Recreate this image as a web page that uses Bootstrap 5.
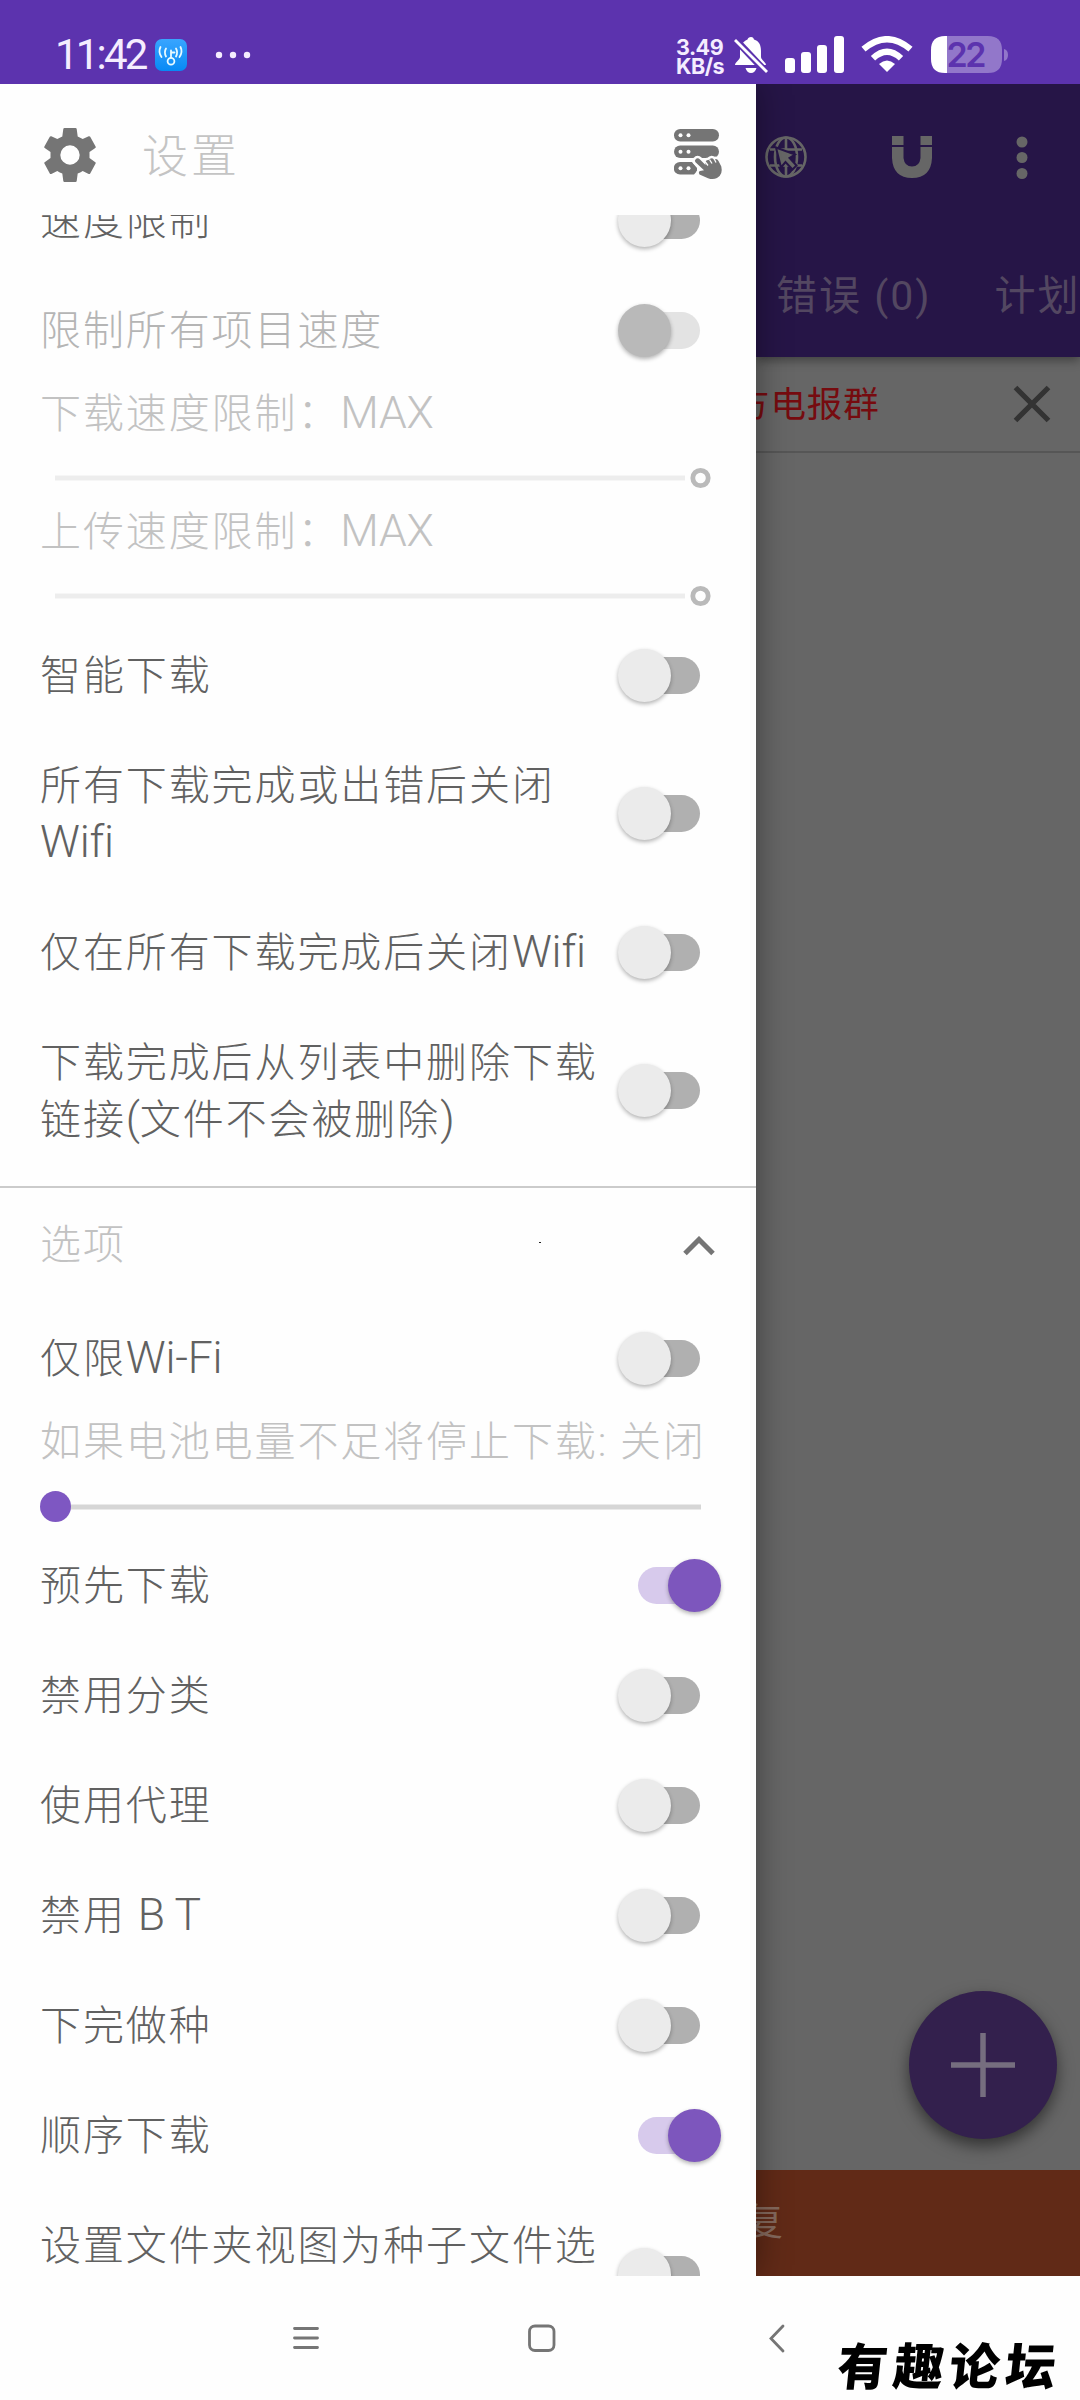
<!DOCTYPE html>
<html lang="zh-CN">
<head>
<meta charset="utf-8">
<title>设置</title>
<meta name="viewport" content="width=device-width, initial-scale=1">
<link href="https://cdn.jsdelivr.net/npm/bootstrap@5.3.0/dist/css/bootstrap.min.css" rel="stylesheet">
<style>
  body { width: 1080px; height: 2400px; overflow: hidden; background: #fefefe; font-family: Roboto, "Noto Sans CJK SC", sans-serif; }
  svg { display: block; flex: none; }
  .status-bar { height: 84px; background: #5c33ae; color: #f5edff; padding: 25px 71px 0 55px; }
  .clock { font-size: 42px; line-height: 60px; width: 100px; letter-spacing: -2.8px; }
  .net-speed { font: 700 21.5px/19px Inter, sans-serif; width: 54px; letter-spacing: -.5px; }
  .stage { height: 2192px; }
  .drawer { width: 756px; background: #fefefe; flex: none; z-index: 2; box-shadow: 0 0 32px rgba(0,0,0,.4); clip-path: inset(0 -40px 0 0); }
  .drawer-head { height: 131px; padding: 0 32px 0 44px; }
  .drawer-title { font-size: 46px; font-weight: 300; letter-spacing: 3px; color: #c4c4c4; margin: 12px 0 0 46px; line-height: 60px; }
  .settings { height: 2061px; }
  .settings > :first-child { margin-top: -50px; }
  .line-item { padding: 27.5px 0 25.5px 40px; color: #616161; }
  .cjk-label { font-size: 41px; line-height: 57px; letter-spacing: 1.9px; font-weight: 300; white-space: nowrap; }
  .latin { font-size: 44.5px; line-height: 1; letter-spacing: -.2px; }
  .line-item.muted { color: #b5b5b5; }
  .caption-row { height: 57px; padding-left: 40px; color: #c2c2c2; line-height: 59px; }
  .toggle { width: 62px; height: 37px; border-radius: 19px; background: #b0b0b0; margin-right: 56px; flex: none; position: relative; top: -1px; }
  .toggle::after { content: ""; position: absolute; left: -20px; top: -8px; width: 53px; height: 53px; border-radius: 50%; background: #ebebeb; box-shadow: 0 2px 4px rgba(0,0,0,.3); }
  .toggle.locked { background: #e3e3e3; }
  .toggle.locked::after { background: #b9b9b9; }
  .toggle.active { background: #d7caec; }
  .toggle.active::after { left: 30px; background: #7d56bd; }
  .slider-row { height: 60.5px; padding: 20px 45px 0 40px; }
  .section-rule { height: 2px; background: #cbcbcb; margin-top: 12px; }
  .section-head { height: 115px; padding: 0 41px 0 40px; color: #c2c2c2; }
  .backdrop-app { background: #666; min-width: 0; }
  .app-head { height: 273px; background: #261547; box-shadow: 0 3px 10px rgba(0,0,0,.4); z-index: 1; }
  .app-tools { padding: 52px 52px 0 9px; }
  .app-tabs { height: 110px; padding-left: 20px; margin-top: 61px; color: #534761; font-size: 41px; letter-spacing: 2px; gap: 63px; white-space: nowrap; line-height: 60px; }
  .notice { height: 96px; border-bottom: 2px solid #565656; padding: 0 29px 0 0; }
  .notice span { color: #760b0f; font-size: 35.5px; letter-spacing: .9px; margin: 4px 0 0 -22px; white-space: nowrap; }
  .fab { width: 148px; height: 148px; border-radius: 50%; background: #33204d; box-shadow: 0 7px 16px rgba(0,0,0,.5); margin: 0 23px 31px 0; }
  .restore-bar { height: 106px; background: #612a17; color: #84695d; font-size: 38px; line-height: 104px; }
  .restore-bar span { margin-left: -11px; font-weight: 400; }
  .nav-keys { height: 124px; padding: 46px 0 0 292px; }
  .watermark { font-family: "Noto Sans CJK SC", sans-serif; font-weight: 900; font-size: 50px; line-height: 64px; letter-spacing: 6px; color: #000; margin: 9px 0 0 53px; transform: skewX(-6deg); white-space: nowrap; }
</style>
<script src="https://cdn.jsdelivr.net/npm/bootstrap@5.3.0/dist/js/bootstrap.bundle.min.js"></script>
</head>
<body class="d-flex flex-column">

<header class="status-bar d-flex align-items-start flex-shrink-0">
  <span class="clock">11:42</span>
  <svg width="32" height="32" viewBox="0 0 32 32" style="margin-top:14px">
    <defs><linearGradient id="appBlue" x1="0" y1="0" x2="0" y2="1"><stop offset="0" stop-color="#39a5ff"/><stop offset="1" stop-color="#078af5"/></linearGradient></defs>
    <rect width="32" height="32" rx="7" fill="url(#appBlue)"/>
    <g fill="none" stroke="#e8faff" stroke-width="1.8" stroke-linecap="round"><circle cx="16" cy="22.3" r="3.4"/><path d="M16 18.5V11.5M16.5 13.5h3M11 9.500q-2.200 3.700 0 8M5.500 8q-2.500 5 1 10M21 9.500q2.200 3.700 0 8M25.500 8q2.500 5-1 10"/></g>
  </svg>
  <svg width="36" height="8" viewBox="0 0 36 8" style="margin:26px auto 0 28px" fill="#f5edff"><circle cx="4" cy="4" r="3.200"/><circle cx="18" cy="4" r="3.200"/><circle cx="32" cy="4" r="3.200"/></svg>
  <div class="net-speed" style="margin-top:13px">3.49<br>KB/s</div>
  <svg width="34" height="37" viewBox="0 0 34 37" style="margin:12px 0 0 4px" fill="#fff">
    <path d="M17 0c-2 0-3 1-3.500 2.500C8 5 6 9 6 14v6c0 3-5 5-5 8h31c0-3-5-5-5-8v-6c0-6-2-10-7-11.500C19.500 1 19 0 17 0ZM11.500 31h11q-1.500 5-5.500 5t-5.500-5Z"/>
    <path d="M0 1 33 36" stroke="#5c33ae" stroke-width="7"/><path d="M1 3 33 35" stroke="#fff" stroke-width="2.800"/>
  </svg>
  <svg width="60" height="37" viewBox="0 0 60 37" style="margin:11px 0 0 17px" fill="#fff"><rect y="22" width="10" height="15" rx="3"/><rect x="16" y="16" width="10" height="21" rx="3"/><rect x="32" y="9" width="10" height="28" rx="3"/><rect x="49" width="10" height="37" rx="3"/></svg>
  <svg width="52" height="37" viewBox="0 0 52 37" style="margin:11px 0 0 16px"><path d="M26 36 18 28q8-7 16 0Z" fill="#fff"/><path d="M2.500 13.200q23.500-20 47 0M12 22.300q14-13 28 0" fill="none" stroke="#fff" stroke-width="6.300"/></svg>
  <svg width="78" height="37" viewBox="0 0 78 37" style="margin:11px 0 0 18px">
    <path d="M16 0h41q14 0 14 14v9q0 14-14 14H16Z" fill="#9277ca"/><path d="M16 0h-2Q0 0 0 14v9q0 14 14 14h2Z" fill="#fff"/><path d="M73 13q4 1 4 6t-4 6Z" fill="#9277ca"/>
    <text x="15.500" y="30.500" font-family="Inter" font-size="34" font-weight="600" textLength="40" fill="#5c33ae">22</text>
  </svg>
</header>

<main class="stage d-flex flex-shrink-0">
  <aside class="drawer d-flex flex-column">
    <div class="drawer-head d-flex align-items-center">
      <svg width="52" height="54" viewBox="0 0 52 54" style="margin-top:11px"><path fill="#757575" fill-rule="evenodd" d="M20.500 0h11q1 0 1.200 1l1 7.500q2.500 1 5 2.500l6-2.700q1-.4 1.500.5l5.400 9.800q.4.900-.3 1.500L45.500 24v6l5.800 4.200q.7.500.3 1.300l-5.400 10q-.6.800-1.500.4l-6-2.900q-2.500 1.600-5 2.600l-1 7.400q-.2 1-1.200 1h-11q-1 0-1.200-1l-1-7.400q-2.500-1-5-2.600l-6 2.900q-1 .4-1.500-.4l-5.400-10q-.4-.8.3-1.300L6.500 30v-6L.700 20Q0 19.500.4 18.600L5.800 8.800q.5-.9 1.500-.5l6 2.700q2.500-1.500 5-2.500l1-7.500q.2-1 1.200-1ZM26 17.300a9.700 9.700 0 1 0 0 19.400 9.700 9.700 0 0 0 0-19.400Z"/></svg>
      <span class="drawer-title">设置</span>
      <svg class="ms-auto" width="50" height="52" viewBox="0 0 50 52" style="margin-top:10px">
        <g fill="#757575"><rect width="45" height="12.500" rx="6.200"/><rect y="16.500" width="45" height="12.500" rx="6.200"/><path d="M6 33h12l5 6v3l-3 3.500H6A6.200 6.200 0 0 1 6 33Z"/></g>
        <path d="M21.500 30.500q2-2.500 4.500 0l5.500 5.500q-1-5 3-5 3-3 5.500-.5 3-1.500 4.500 1.500l2.800 5.500q2 8-4.300 11.500-4 2-9 .2l-8.500-3.700q-1.500-2.500.5-3.500l4-.7-8.500-8q-1.300-1.500 0-2.800Z" fill="#757575" stroke="#fefefe" stroke-width="5" paint-order="stroke"/>
        <g fill="#fefefe"><circle cx="6.500" cy="6.200" r="2"/><circle cx="14.500" cy="6.200" r="2"/><circle cx="6.500" cy="22.700" r="2"/><circle cx="14.500" cy="22.700" r="2"/><circle cx="6.500" cy="39.200" r="2"/><circle cx="14.500" cy="39.200" r="2"/></g>
        <path d="m31 32.500 3 4m1.500-6 2.500 4m2-5 2 4" stroke="#fefefe" stroke-width="1.300"/>
      </svg>
    </div>

    <div class="settings overflow-hidden">
      <div class="line-item d-flex justify-content-between align-items-center"><span class="cjk-label">速度限制</span><i class="toggle"></i></div>
      <div class="line-item muted d-flex justify-content-between align-items-center"><span class="cjk-label">限制所有项目速度</span><i class="toggle locked"></i></div>
      <div class="caption-row cjk-label">下载速度限制：<span class="latin">MAX</span></div>
      <div class="slider-row"><svg width="672" height="32" viewBox="0 0 672 32"><path d="M15 16h630" stroke="#ededed" stroke-width="5"/><circle cx="660.500" cy="16" r="7.700" fill="none" stroke="#bababa" stroke-width="4.800"/></svg></div>
      <div class="caption-row cjk-label">上传速度限制：<span class="latin">MAX</span></div>
      <div class="slider-row"><svg width="672" height="32" viewBox="0 0 672 32"><path d="M15 16h630" stroke="#ededed" stroke-width="5"/><circle cx="660.500" cy="16" r="7.700" fill="none" stroke="#bababa" stroke-width="4.800"/></svg></div>
      <div class="line-item d-flex justify-content-between align-items-center"><span class="cjk-label">智能下载</span><i class="toggle"></i></div>
      <div class="line-item d-flex justify-content-between align-items-center"><span class="cjk-label">所有下载完成或出错后关闭<br><span class="latin">Wifi</span></span><i class="toggle"></i></div>
      <div class="line-item d-flex justify-content-between align-items-center"><span class="cjk-label">仅在所有下载完成后关闭<span class="latin">Wifi</span></span><i class="toggle"></i></div>
      <div class="line-item d-flex justify-content-between align-items-center"><span class="cjk-label">下载完成后从列表中删除下载<br>链接<span class="latin">(</span>文件不会被删除<span class="latin">)</span></span><i class="toggle"></i></div>

      <div class="section-rule"></div>
      <div class="section-head d-flex align-items-center">
        <span class="cjk-label">选项</span>
        <svg class="ms-auto" width="180" height="20" viewBox="0 0 180 20"><rect x="4" y="6" width="2" height="1" fill="#222"/><path d="m150 17.500 14-14 14 14" fill="none" stroke="#757575" stroke-width="5"/></svg>
      </div>
      <div class="line-item d-flex justify-content-between align-items-center"><span class="cjk-label">仅限<span class="latin">Wi‑Fi</span></span><i class="toggle"></i></div>
      <div class="caption-row cjk-label">如果电池电量不足将停止下载: 关闭</div>
      <div class="slider-row"><svg width="672" height="32" viewBox="0 0 672 32"><path d="M15 17h646" stroke="#d6d6d6" stroke-width="5"/><circle cx="15.500" cy="16.500" r="15.500" fill="#7e57c2"/></svg></div>
      <div class="line-item d-flex justify-content-between align-items-center"><span class="cjk-label">预先下载</span><i class="toggle active"></i></div>
      <div class="line-item d-flex justify-content-between align-items-center"><span class="cjk-label">禁用分类</span><i class="toggle"></i></div>
      <div class="line-item d-flex justify-content-between align-items-center"><span class="cjk-label">使用代理</span><i class="toggle"></i></div>
      <div class="line-item d-flex justify-content-between align-items-center"><span class="cjk-label">禁用 <span class="latin">B T</span></span><i class="toggle"></i></div>
      <div class="line-item d-flex justify-content-between align-items-center"><span class="cjk-label">下完做种</span><i class="toggle"></i></div>
      <div class="line-item d-flex justify-content-between align-items-center"><span class="cjk-label">顺序下载</span><i class="toggle active"></i></div>
      <div class="line-item d-flex justify-content-between align-items-center"><span class="cjk-label">设置文件夹视图为种子文件选<br>&nbsp;</span><i class="toggle"></i></div>
    </div>
  </aside>

  <section class="backdrop-app flex-grow-1 d-flex flex-column overflow-hidden">
    <div class="app-head flex-shrink-0">
      <div class="app-tools d-flex justify-content-between">
        <svg width="42" height="42" viewBox="0 0 42 42" fill="none" stroke="#666" stroke-width="2.600"><circle cx="21" cy="21" r="19.500"/><ellipse cx="21" cy="21" rx="11" ry="19.500"/><path d="M21 1v40M5 13.500h32M5 29.500h32"/><path d="m11 11.500 19 7-5.500 3.500 7 7.500-4 4-7-7.500-4.500 5.500Z" fill="#666" stroke="#261547" stroke-width="2"/></svg>
        <svg width="40" height="42" viewBox="0 0 40 42" fill="#666"><path d="M0 0h11.500v9H0ZM28.500 0H40v9H28.500ZM0 11h11.500v11q1 8.500 8.500 8.500t8.500-8.500V11H40v11q-1 20-20 20T0 22Z"/></svg>
        <svg width="12" height="44" viewBox="0 0 12 44" fill="#666"><circle cx="6" cy="6" r="5.500"/><circle cx="6" cy="21.500" r="5.500"/><circle cx="6" cy="37.500" r="5.500"/></svg>
      </div>
      <div class="app-tabs d-flex align-items-center"><span>错误 (0)</span><span>计划</span></div>
    </div>
    <div class="notice d-flex align-items-center justify-content-between flex-shrink-0">
      <span>方电报群</span>
      <svg width="38" height="38" viewBox="0 0 38 38"><path d="m2.500 2.500 33 33m0-33-33 33" stroke="#333" stroke-width="5.200"/></svg>
    </div>
    <div class="fab mt-auto align-self-end flex-shrink-0 d-flex align-items-center justify-content-center">
      <svg width="64" height="64" viewBox="0 0 64 64"><path d="M32 0v64M0 32h64" stroke="#766e7f" stroke-width="5.500"/></svg>
    </div>
    <div class="restore-bar flex-shrink-0"><span>复</span></div>
  </section>
</main>

<footer class="nav-keys d-flex align-items-start flex-shrink-0">
  <svg width="28" height="32" viewBox="0 0 28 32" stroke="#757575" stroke-width="2.800" stroke-linecap="round"><path d="M2.500 6.500h23M2.500 16h23M2.500 25.500h23"/></svg>
  <svg width="28" height="32" viewBox="0 0 28 32" style="margin-left:208px" fill="none" stroke="#757575" stroke-width="2.800"><rect x="1.500" y="4" width="24.500" height="24.500" rx="5.500"/></svg>
  <svg width="16" height="32" viewBox="0 0 16 32" style="margin-left:213px" fill="none" stroke="#757575" stroke-width="2.800" stroke-linecap="round"><path d="M14 4 2 16.500 14 29"/></svg>
  <span class="watermark">有趣论坛</span>
</footer>
</body>
</html>
